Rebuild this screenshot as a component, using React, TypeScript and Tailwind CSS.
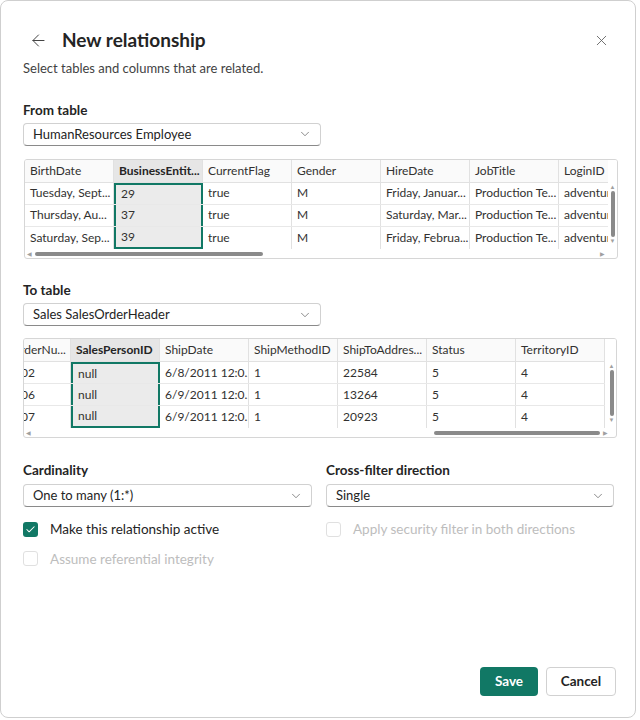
import { ArrowLeft, X, ChevronDown, Check } from 'lucide-react'

type Column = { name: string; values: string[]; wide?: boolean }

const employeeColumns: Column[] = [
  { name: 'BirthDate', values: ['Tuesday, Sept...', 'Thursday, Au...', 'Saturday, Sep...'] },
  { name: 'BusinessEntit...', values: ['29', '37', '39'] },
  { name: 'CurrentFlag', values: ['true', 'true', 'true'] },
  { name: 'Gender', values: ['M', 'M', 'M'] },
  { name: 'HireDate', values: ['Friday, Januar...', 'Saturday, Mar...', 'Friday, Februa...'] },
  { name: 'JobTitle', values: ['Production Te...', 'Production Te...', 'Production Te...'] },
  { name: 'LoginID', values: ['adventure-works\\...', 'adventure-works\\...', 'adventure-works\\...'] },
]

const orderColumns: Column[] = [
  { name: 'SalesOrderNu...', values: ['SO43702', 'SO43706', 'SO43707'], wide: true },
  { name: 'SalesPersonID', values: ['null', 'null', 'null'] },
  { name: 'ShipDate', values: ['6/8/2011 12:0...', '6/9/2011 12:0...', '6/9/2011 12:0...'] },
  { name: 'ShipMethodID', values: ['1', '1', '1'] },
  { name: 'ShipToAddres...', values: ['22584', '13264', '20923'] },
  { name: 'Status', values: ['5', '5', '5'] },
  { name: 'TerritoryID', values: ['4', '4', '4'] },
]

function Dropdown({ value, width }: { value: string; width: string }) {
  return (
    <div
      className={`${width} h-[23px] flex items-center justify-between pl-[9px] pr-[8px] border border-[#d1d1d1] border-b-[#8a8a8a] rounded-[4px] bg-white text-[13px] text-[#242424]`}
    >
      <span>{value}</span>
      <ChevronDown size={14} strokeWidth={1.25} className="text-[#616161]" />
    </div>
  )
}

function DataGrid({
  columns,
  selected,
  offset,
  thumb,
}: {
  columns: Column[]
  selected: number
  offset: string
  thumb: string
}) {
  const rows = [0, 1, 2]
  return (
    <div className="w-[594px] h-[100px] border border-[#d6d6d6] rounded-[3px] overflow-hidden bg-white text-[12px] text-[#323130]">
      <div className="flex h-[90px]">
        <div className="flex-1 overflow-hidden">
          <div className={`flex flex-col w-max ${offset}`}>
            <div className="flex h-[23px] border-b border-[#e1e1e1] bg-[#fafafa]">
              {columns.map((c, i) => (
                <div
                  key={c.name}
                  className={`${c.wide ? 'w-[92px]' : 'w-[89px]'} shrink-0 px-[5px] flex items-center border-r border-[#e1e1e1] whitespace-nowrap overflow-hidden ${
                    i === selected ? 'bg-[#e6e6e6] font-bold text-[#242424]' : ''
                  }`}
                >
                  {c.name}
                </div>
              ))}
            </div>
            {rows.map((r) => (
              <div key={r} className="flex h-[22px] border-b border-[#e8e8e8] last:border-b-0">
                {columns.map((c, i) => (
                  <div
                    key={c.name}
                    className={`${c.wide ? 'w-[92px]' : 'w-[89px]'} shrink-0 px-[5px] flex items-center border-r border-[#e1e1e1] whitespace-nowrap overflow-hidden ${
                      i === selected
                        ? `bg-[#ebebeb] border-l-2 border-r-2 border-l-[#117865] border-r-[#117865] ${
                            r === 0 ? 'border-t-2 border-t-[#117865]' : ''
                          } ${r === 2 ? 'border-b-2 border-b-[#117865]' : ''}`
                        : ''
                    }`}
                  >
                    {c.values[r]}
                  </div>
                ))}
              </div>
            ))}
          </div>
        </div>
        {/* vertical scrollbar */}
        <div className="w-[9px] shrink-0 flex flex-col items-center pt-[24px] bg-white">
          <span className="text-[6px] leading-[6px] text-[#a0a0a0]">▲</span>
          <div className="w-[4px] h-[46px] my-[1px] rounded-full bg-[#8a8a8a]" />
          <span className="text-[6px] leading-[6px] text-[#a0a0a0]">▼</span>
        </div>
      </div>
      {/* horizontal scrollbar */}
      <div className="h-[8px] flex items-center px-[2px]">
        <span className="text-[6px] leading-[6px] text-[#a0a0a0]">◀</span>
        <div className="flex-1 px-[3px] flex">
          <div className={`h-[4px] rounded-full bg-[#8a8a8a] ${thumb}`} />
        </div>
        <span className="text-[6px] leading-[6px] text-[#a0a0a0] mr-[10px]">▶</span>
      </div>
    </div>
  )
}

function CheckBox({ checked, disabled, label }: { checked?: boolean; disabled?: boolean; label: string }) {
  return (
    <div className="flex items-center gap-[12px]">
      <div
        className={`w-[15px] h-[15px] rounded-[3px] flex items-center justify-center ${
          checked ? 'bg-[#117865]' : disabled ? 'border border-[#e0e0e0]' : 'border border-[#616161]'
        }`}
      >
        {checked && <Check size={11} strokeWidth={2.25} className="text-white" />}
      </div>
      <span className={`text-[13.5px] ${disabled ? 'text-[#bdbdbd]' : 'text-[#242424]'}`}>{label}</span>
    </div>
  )
}

export default function App() {
  return (
    <div className="w-[640px] h-[720px] bg-white" style={{ fontFamily: 'Lato, "Open Sans", sans-serif' }}>
      <div className="w-[636px] h-[718px] border border-[#cfcfcf] rounded-[8px] bg-white flex flex-col px-[22px]">
        {/* Header */}
        <div className="flex items-center justify-between mt-[25px] h-[28px]">
          <div className="flex items-center gap-[14px] ml-[6px]">
            <ArrowLeft size={19} strokeWidth={1.25} className="text-[#424242]" />
            <h1 className="text-[19px] font-bold text-[#242424]">New relationship</h1>
          </div>
          <X size={17} strokeWidth={1.25} className="text-[#616161] mr-[3px]" />
        </div>
        <p className="mt-[5px] text-[13px] text-[#424242]">Select tables and columns that are related.</p>

        {/* From table */}
        <label className="mt-[21px] text-[13.5px] font-bold text-[#242424]">From table</label>
        <div className="mt-[3px]">
          <Dropdown value="HumanResources Employee" width="w-[298px]" />
        </div>
        <div className="mt-[13px] ml-[1px]">
          <DataGrid columns={employeeColumns} selected={1} offset="" thumb="w-[228px]" />
        </div>

        {/* To table */}
        <label className="mt-[21px] text-[13.5px] font-bold text-[#242424]">To table</label>
        <div className="mt-[3px]">
          <Dropdown value="Sales SalesOrderHeader" width="w-[298px]" />
        </div>
        <div className="mt-[12px]">
          <DataGrid columns={orderColumns} selected={1} offset="ml-[-45px]" thumb="ml-[400px] w-[166px]" />
        </div>

        {/* Options */}
        <div className="mt-[22px] grid grid-cols-2 gap-x-[16px]">
          <div className="flex flex-col">
            <label className="text-[13.5px] font-bold text-[#242424]">Cardinality</label>
            <div className="mt-[4px]">
              <Dropdown value="One to many (1:*)" width="w-[289px]" />
            </div>
          </div>
          <div className="flex flex-col">
            <label className="text-[13.5px] font-bold text-[#242424]">Cross-filter direction</label>
            <div className="mt-[4px]">
              <Dropdown value="Single" width="w-[288px]" />
            </div>
          </div>
          <div className="mt-[12px]">
            <CheckBox checked label="Make this relationship active" />
          </div>
          <div className="mt-[12px]">
            <CheckBox disabled label="Apply security filter in both directions" />
          </div>
          <div className="mt-[9px]">
            <CheckBox disabled label="Assume referential integrity" />
          </div>
        </div>

        {/* Footer */}
        <div className="mt-auto mb-[21px] flex justify-end gap-[8px] mr-[-3px]">
          <button className="w-[58px] h-[29px] rounded-[4px] bg-[#117865] text-white text-[13.5px] font-bold">
            Save
          </button>
          <button className="w-[70px] h-[29px] rounded-[4px] border border-[#d1d1d1] bg-white text-[#242424] text-[13.5px] font-bold">
            Cancel
          </button>
        </div>
      </div>
    </div>
  )
}
